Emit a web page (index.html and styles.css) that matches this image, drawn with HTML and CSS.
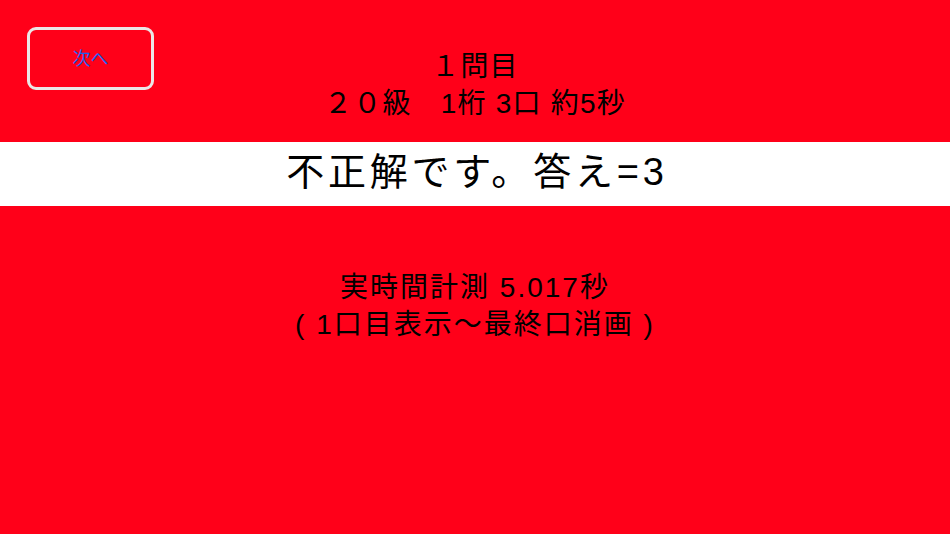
FILE: index.html
```html
<!DOCTYPE html>
<html lang="ja">
<head>
<meta charset="utf-8">
<link rel="stylesheet" href="styles.css">
</head>
<body>
<div class="screen">
  <header class="header">
    <button class="next-btn">次へ</button>
    <div class="line">１問目</div>
    <div class="line">２０級　1桁 3口 約5秒</div>
  </header>
  <div class="band"><span class="band-text">不正解です。答え=3</span></div>
  <section class="info">
    <div class="line wide">実時間計測 5.017秒</div>
    <div class="line wide">( 1口目表示～最終口消画 )</div>
  </section>
</div>
</body>
</html>
```

FILE: styles.css
```css
* { box-sizing: border-box; }
html, body {
  margin: 0;
  padding: 0;
  width: 950px;
  height: 534px;
  overflow: hidden;
}
body {
  background: #ff0019;
  font-family: "Liberation Sans", "Noto Sans CJK JP", sans-serif;
  color: #000;
}
.screen {
  display: flex;
  flex-direction: column;
  height: 534px;
}
.header {
  position: relative;
  height: 142px;
  padding-top: 48px;
  display: flex;
  flex-direction: column;
  align-items: center;
}
.line {
  font-size: 28px;
  line-height: 37px;
  text-align: center;
  letter-spacing: 1.2px;
}
.line.wide {
  letter-spacing: 2px;
}
.next-btn {
  position: absolute;
  left: 27px;
  top: 27px;
  width: 127px;
  height: 63px;
  background: transparent;
  border: 3px solid #ebe6e6;
  border-radius: 9px;
  color: #1f5fee;
  font-family: "Noto Sans CJK JP", sans-serif;
  font-size: 18px;
  padding: 0 0 4px 0;
}
.band {
  background: #fff;
  height: 64px;
  display: flex;
  align-items: center;
  justify-content: center;
  padding-bottom: 5px;
}
.band-text {
  font-size: 38px;
  line-height: 44px;
  letter-spacing: 3.8px;
  margin-right: -3.8px;
}
.info {
  padding-top: 63px;
  display: flex;
  flex-direction: column;
  align-items: center;
}
```
